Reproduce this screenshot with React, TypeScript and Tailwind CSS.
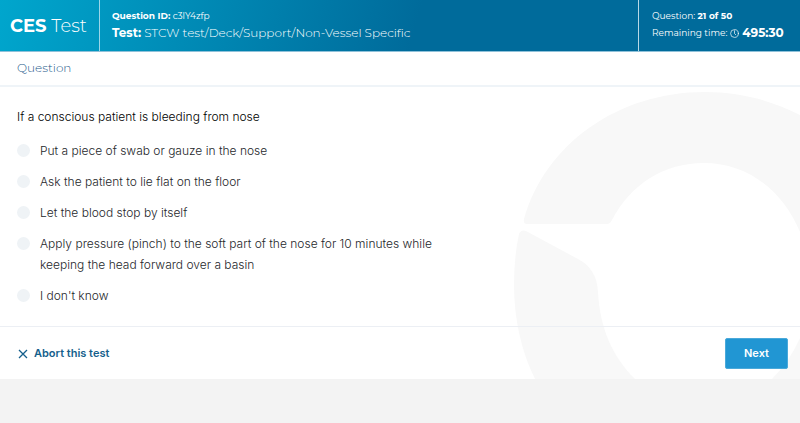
import { useState } from 'react';

const answers = [
  'Put a piece of swab or gauze in the nose',
  'Ask the patient to lie flat on the floor',
  'Let the blood stop by itself',
  'Apply pressure (pinch) to the soft part of the nose for 10 minutes while keeping the head forward over a basin',
  "I don't know",
];

function Header() {
  return (
    <header className="flex items-stretch border-b border-[#8fc1d9] bg-[linear-gradient(105deg,#00a6cd_0%,#006b9b_52%)] font-[Montserrat,Inter,sans-serif] text-white">
      {/* Logo */}
      <div className="flex w-[99px] shrink-0 items-center pl-[10px] text-lg">
        <p className="whitespace-nowrap font-light">
          <strong className="font-bold">CES</strong> Test
        </p>
      </div>

      {/* Test info */}
      <div className="min-w-0 flex-1 border-l border-[#9bd5e8] pt-2 pb-[9px] pl-3">
        <p className="text-[9px] leading-4">
          <strong className="font-bold">Question ID:</strong> c3lY4zfp
        </p>
        <p className="text-xs leading-[18px] font-light">
          <strong className="font-bold">Test:</strong> STCW test/Deck/Support/Non-Vessel Specific
        </p>
      </div>

      {/* Progress */}
      <div className="w-[162px] shrink-0 border-l border-[#b8d8e6] pt-2 pb-[9px] pl-[13px]">
        <p className="text-[9px] leading-4">
          Question: <strong className="font-bold">21 of 50</strong>
        </p>
        <p className="flex items-center text-[9px] leading-[18px] whitespace-nowrap">
          Remaining time:
          <svg
            className="mx-[3px] size-[9px]"
            viewBox="0 0 18 18"
            fill="none"
            stroke="currentColor"
            strokeWidth="1.4"
            strokeLinecap="round"
          >
            <circle cx="9" cy="9" r="7.8" />
            <path d="M9 3.5V9l2.6 2.6" />
          </svg>
          <strong className="text-xs leading-[18px] font-bold">495:30</strong>
        </p>
      </div>
    </header>
  );
}

function Watermark() {
  return (
    <svg
      className="pointer-events-none absolute right-0 bottom-0 h-[287px] w-[287px]"
      viewBox="513 92 287 287"
      fill="#f8f8f8"
      aria-hidden="true"
    >
      <path d="M527 224Q523 224 524 219C545 145 617 92 705 92C741 92 773 101 800 115V232C783 191 748 163 704 163C664 163 631 184 612 220Q610 224 607 224Z" />
      <path d="M519 234Q521 229 526 231L578 259Q597 269 598 292C600 328 612 356 635 379H535C521 351 514 318 514 285Q514 257 519 234Z" />
      <path d="M800 338Q790 361 772 379H800Z" />
    </svg>
  );
}

export default function App() {
  const [selected, setSelected] = useState<number | null>(null);

  return (
    <div className="min-h-screen bg-[#f3f3f3] font-[Inter,sans-serif]">
      <Header />

      <main className="relative bg-white">
        <Watermark />

        <div className="relative">
          <h1 className="border-b-2 border-[#eff4f8] px-[17px] pt-[7px] pb-2 font-[Montserrat,Inter,sans-serif] text-xs leading-[18px] font-light text-[#24588a]">
            Question
          </h1>

          <fieldset className="px-[17px] pt-[19px] pb-5">
            <legend className="float-left w-full text-xs leading-[21px] font-light text-black">
              If a conscious patient is bleeding from nose
            </legend>
            <div className="flex max-w-[440px] clear-both flex-col gap-[10px] pt-[13px]">
              {answers.map((answer, i) => (
                <label
                  key={answer}
                  className="flex cursor-pointer items-start gap-[10px] text-xs leading-[21px] font-light text-[#25272b]"
                >
                  <input
                    type="radio"
                    name="answer"
                    checked={selected === i}
                    onChange={() => setSelected(i)}
                    className="mt-1 size-[13px] shrink-0 appearance-none rounded-full bg-[#eff3f6] checked:bg-[#2196d3]"
                  />
                  {answer}
                </label>
              ))}
            </div>
          </fieldset>

          <div className="flex items-center justify-between border-t border-[#eceff4] pt-[11px] pr-3 pb-[10px] pl-[18px]">
            <button
              type="button"
              className="flex cursor-pointer items-center gap-[6px] text-[11px] font-semibold text-[#155f8c]"
            >
              <svg
                className="size-[10px]"
                viewBox="0 0 10 10"
                fill="none"
                stroke="currentColor"
                strokeWidth="1.3"
              >
                <path d="M1 1l8 8M9 1L1 9" />
              </svg>
              Abort this test
            </button>
            <button
              type="button"
              className="h-[31px] w-[63px] cursor-pointer rounded-xs border border-[#4aa9da] bg-[#2196d3] text-[11px] font-semibold text-white"
            >
              Next
            </button>
          </div>
        </div>
      </main>
    </div>
  );
}
